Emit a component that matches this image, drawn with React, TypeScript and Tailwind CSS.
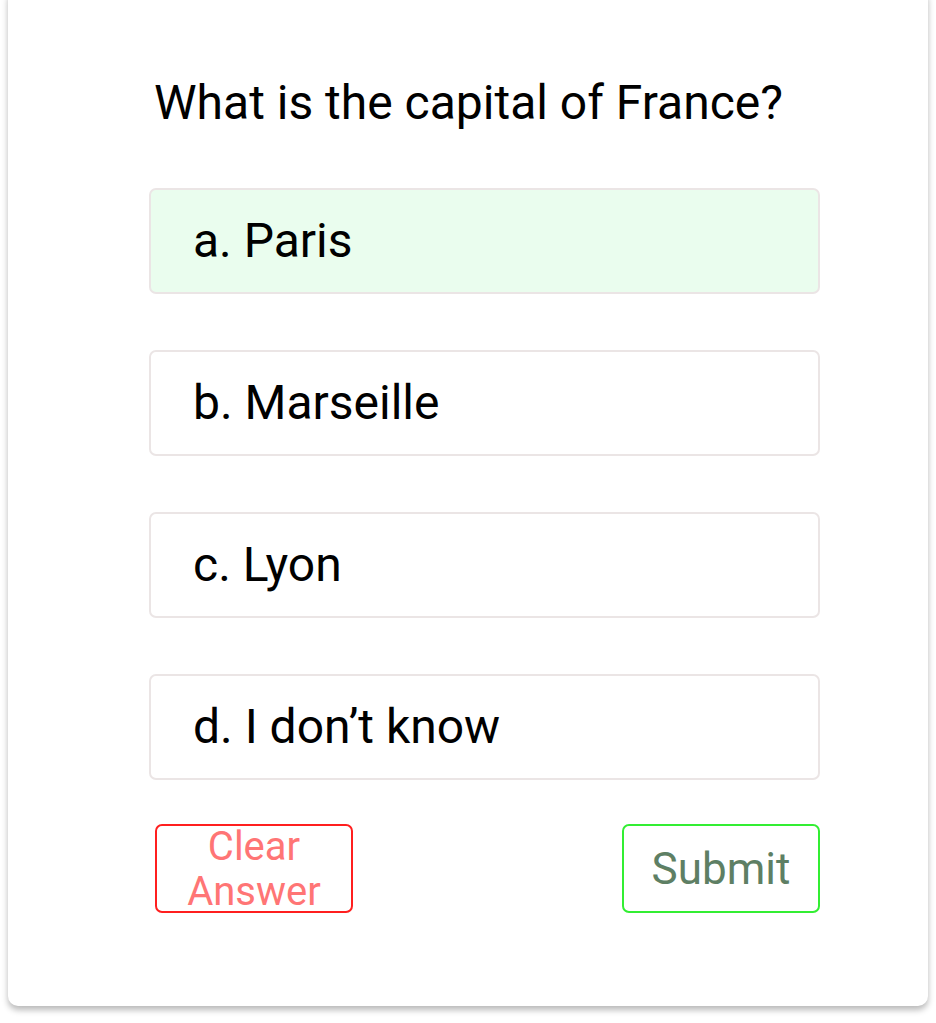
import React from "react";

const options = [
  { label: "a. Paris", selected: true },
  { label: "b. Marseille", selected: false },
  { label: "c. Lyon", selected: false },
  { label: "d. I don\u2019t know", selected: false },
];

export default function App() {
  return (
    <div className="w-[936px] h-[1023px] bg-white overflow-hidden" style={{ fontFamily: "Roboto, 'Liberation Sans', sans-serif" }}>
      <div className="mx-[8px] mt-[-12px] h-[1018px] rounded-[10px] bg-white shadow-[0_4px_6px_rgba(0,0,0,0.28)] pt-[87px] pl-[141px] pr-[108px]">
        <div className="pl-[5px] text-[48px] leading-[56px] text-black whitespace-nowrap">What is the capital of France?</div>
        <div className="mt-[57px] flex flex-col gap-[56px]">
          {options.map((o) => (
            <div
              key={o.label}
              className={`h-[106px] rounded-[7px] border-2 border-[#ebe5e5] flex items-center pl-[42px] text-[48px] text-black ${o.selected ? "bg-[#eafdee]" : "bg-white"}`}
            >
              {o.label}
            </div>
          ))}
        </div>
        <div className="mt-[44px] flex justify-between pl-[6px]">
          <button className="w-[198px] h-[89px] rounded-[7px] border-2 border-[#ff1f1f] text-[#ff7575] text-[40px] leading-[45px] flex flex-col items-center justify-center">
            <span>Clear</span>
            <span>Answer</span>
          </button>
          <button className="w-[198px] h-[89px] rounded-[7px] border-2 border-[#33ee33] text-[#5e7f64] text-[44px] flex items-center justify-center">
            Submit
          </button>
        </div>
      </div>
    </div>
  );
}
